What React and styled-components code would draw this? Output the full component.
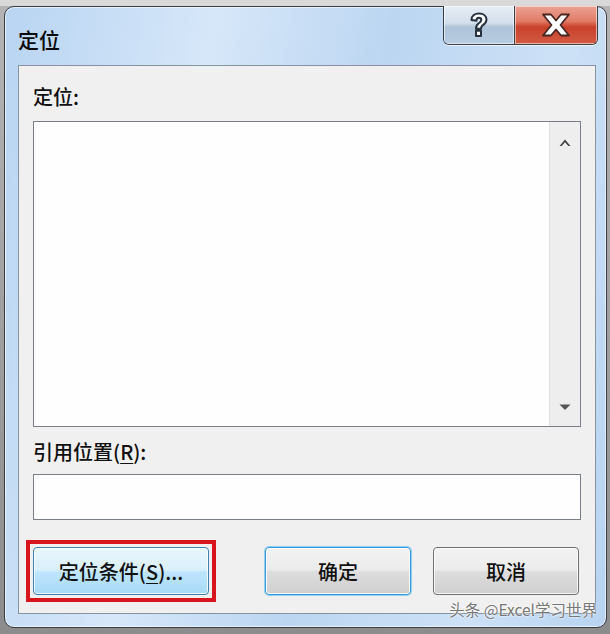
import React from "react";
import styled, { createGlobalStyle } from "styled-components";

const Global = createGlobalStyle`
  html, body {
    margin: 0;
    padding: 0;
    background: #c9c9c9;
    font-family: "Noto Sans CJK SC", "Noto Sans", sans-serif;
  }
`;

const Page = styled.div`
  width: 610px;
  height: 634px;
  padding: 6px 3px 6px 4px;
  box-sizing: border-box;
  background: linear-gradient(#d9d9d9 0, #d9d9d9 6px, #b4b4b4 6px, #8c8c8c 100%);
`;

const Window = styled.div`
  position: relative;
  height: 100%;
  box-sizing: border-box;
  border: 1px solid #3a3d42;
  border-radius: 10px;
  background: linear-gradient(100deg, #b9d5f2 0%, #d6e7f9 30%, #bcd6f1 55%, #cde1f6 80%, #b8d4f1 100%);
  box-shadow: inset 0 0 0 1px rgba(255, 255, 255, 0.6);
  display: flex;
  flex-direction: column;
  padding: 0 10px 13px 13px;
`;

const TitleBar = styled.div`
  height: 58px;
  display: flex;
  align-items: flex-start;
  justify-content: space-between;
`;

const Title = styled.div`
  font-size: 21px;
  font-weight: 500;
  color: #0a0a0a;
  margin-top: 17px;
`;

const Caption = styled.div`
  display: flex;
  margin-top: -1px;
  margin-right: -2px;
  border: 1px solid #3b3f46;
  border-top: none;
  border-radius: 0 0 6px 6px;
  overflow: hidden;
  height: 38px;
  box-shadow: 0 1px 0 rgba(255, 255, 255, 0.7);
`;

const CapButton = styled.div`
  width: ${p => p.$w}px;
  display: flex;
  align-items: center;
  justify-content: center;
  background: ${p => p.$close
    ? "linear-gradient(#eba193 0%, #e27c68 40%, #c9412a 55%, #d25b42 100%)"
    : "linear-gradient(#e6edf5 0%, #d3dfeb 45%, #aec3d8 55%, #b8cde2 100%)"};
  box-shadow: inset 0 0 0 1px rgba(255, 255, 255, 0.55);
  & + & {
    border-left: 1px solid #3b3f46;
  }
`;

const Client = styled.div`
  flex: 1;
  border: 1px solid #8593a3;
  background: #f0f0f0;
  padding: 19px 14px 0 14px;
  display: flex;
  flex-direction: column;
`;

const Label = styled.div`
  font-size: 20px;
  line-height: 24px;
  font-weight: 500;
  color: #111;
  margin-top: ${p => p.$top || 0}px;
`;

const Key = styled.span`
  text-decoration: underline;
  text-underline-offset: 3px;
  text-decoration-thickness: 1px;
`;

const ListBox = styled.div`
  margin-top: 12px;
  height: 306px;
  box-sizing: border-box;
  border: 1px solid #7a7f87;
  background: #fefefe;
  display: flex;
  justify-content: flex-end;
`;

const ScrollBar = styled.div`
  width: 30px;
  background: #eeeeee;
  border-left: 1px solid #dedede;
  display: flex;
  flex-direction: column;
  justify-content: space-between;
  align-items: center;
  padding: 17px 0 15px;
`;

const TextInput = styled.div`
  margin-top: 10px;
  height: 46px;
  box-sizing: border-box;
  border: 1px solid #7a7f87;
  background: #fefefe;
`;

const ButtonRow = styled.div`
  margin-top: 27px;
  display: flex;
  align-items: center;
`;

const Marker = styled.div`
  margin: -7px;
  padding: 3px;
  border: 4px solid #d8151c;
  display: flex;
`;

const Button = styled.div`
  width: ${p => p.$w}px;
  height: 48px;
  margin-left: ${p => p.$gap || 0}px;
  box-sizing: border-box;
  border-radius: 4px;
  display: flex;
  align-items: center;
  justify-content: center;
  font-size: 20px;
  font-weight: 500;
  color: #111;
  border: 1px solid ${p => p.$hover ? "#3c7fb1" : p.$default ? "#3399dd" : "#707070"};
  background: ${p => p.$hover
    ? "linear-gradient(#eaf6fd 0%, #d9f0fc 48%, #bee6fd 52%, #a7d9f5 100%)"
    : "linear-gradient(#f3f3f3 0%, #ebebeb 48%, #dddddd 52%, #cfcfcf 100%)"};
  box-shadow: ${p => p.$default
    ? "0 0 0 1px #8fd0f3, inset 0 0 0 1px #ffffff"
    : "inset 0 0 0 1px rgba(255,255,255,0.8)"};
`;

const Watermark = styled.div`
  position: absolute;
  right: 9px;
  bottom: 7px;
  font-size: 15.5px;
  color: #777;
  text-shadow: 0 0 2px #ffffff, 0 0 2px #ffffff;
`;

const Arrow = ({ down }) => (
  <svg width="12" height="8" viewBox="0 0 12 8">
    {down
      ? <path d="M0.5 1.5 L11.5 1.5 L6 7 Z" fill="#555" />
      : <path d="M6 0.5 L11.5 7 L9.3 7 L6 3.2 L2.7 7 L0.5 7 Z" fill="#444" />}
  </svg>
);

const HelpIcon = () => (
  <svg width="20" height="26" viewBox="0 0 20 26">
    <path
      d="M2.5 8 C2.5 3.5 6 1.5 10 1.5 C14.5 1.5 17.5 4 17.5 7.8 C17.5 11 15 12.3 13.3 13.6 C12.3 14.4 12 15.3 12 16.8 L7 16.8 C7 14.5 7.6 12.8 9.6 11.4 C11.2 10.3 12.3 9.6 12.3 8 C12.3 6.6 11.3 5.8 9.9 5.8 C8.4 5.8 7.4 6.8 7.4 8.8 Z M7 18.8 L12 18.8 L12 24 L7 24 Z"
      fill="#fff"
      stroke="#27313d"
      strokeWidth="2"
      strokeLinejoin="round"
    />
  </svg>
);

const CloseIcon = () => (
  <svg width="30" height="24" viewBox="0 0 30 24">
    <path
      d="M2 1.5 L10 1.5 L15 7.5 L20 1.5 L28 1.5 L19.5 12 L28 22.5 L20 22.5 L15 16.5 L10 22.5 L2 22.5 L10.5 12 Z"
      fill="#fff"
      stroke="#4a2622"
      strokeWidth="1.8"
      strokeLinejoin="round"
    />
  </svg>
);

export default function App() {
  return (
    <>
      <Global />
      <Page>
        <Window>
          <TitleBar>
            <Title>定位</Title>
            <Caption>
              <CapButton $w={70}><HelpIcon /></CapButton>
              <CapButton $w={82} $close><CloseIcon /></CapButton>
            </Caption>
          </TitleBar>
          <Client>
            <Label>定位:</Label>
            <ListBox>
              <ScrollBar>
                <Arrow />
                <Arrow down />
              </ScrollBar>
            </ListBox>
            <Label $top={13}>引用位置(<Key>R</Key>):</Label>
            <TextInput />
            <ButtonRow>
              <Marker>
                <Button $w={176} $hover>定位条件(<Key>S</Key>)...</Button>
              </Marker>
              <Button $w={146} $gap={56} $default>确定</Button>
              <Button $w={146} $gap={22}>取消</Button>
            </ButtonRow>
          </Client>
          <Watermark>头条 @Excel学习世界</Watermark>
        </Window>
      </Page>
    </>
  );
}
